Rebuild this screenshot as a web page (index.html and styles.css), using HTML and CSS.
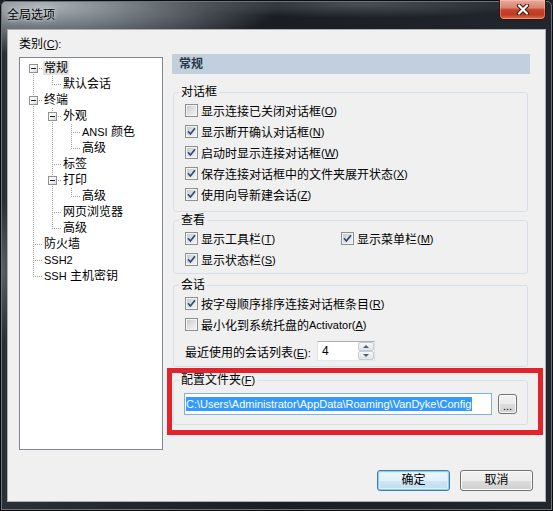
FILE: index.html
```html
<!DOCTYPE html>
<html lang="zh-CN">
<head>
<meta charset="utf-8">
<title>全局选项</title>
<link rel="stylesheet" href="styles.css">
</head>
<body>
<div class="window">
  <div class="titlebar">
    <span class="title">全局选项</span>
    <span class="close">
      <svg width="14" height="11" viewBox="0 0 14 11">
        <path d="M3 1.5 L11 9.5 M11 1.5 L3 9.5" stroke="#3a1410" stroke-width="4.2" stroke-linecap="round" fill="none"/>
        <path d="M3 1.5 L11 9.5 M11 1.5 L3 9.5" stroke="#ffffff" stroke-width="2.3" stroke-linecap="round" fill="none"/>
      </svg>
    </span>
  </div>
  <div class="client">
    <div class="main">
      <div class="left">
        <div class="cat-label">类别<span class="ak">(<u>C</u>):</span></div>
        <div class="tree">
          <div class="row"><span class="g exp first"><span class="box"></span></span><span class="lbl sel">常规</span></div>
          <div class="row"><span class="g pipe"></span><span class="g elbow"></span><span class="lbl">默认会话</span></div>
          <div class="row"><span class="g exp"><span class="box"></span></span><span class="lbl">终端</span></div>
          <div class="row"><span class="g pipe"></span><span class="g exp"><span class="box"></span></span><span class="lbl">外观</span></div>
          <div class="row"><span class="g pipe"></span><span class="g pipe"></span><span class="g tee"></span><span class="lbl"><span class="lat">ANSI</span> 颜色</span></div>
          <div class="row"><span class="g pipe"></span><span class="g pipe"></span><span class="g elbow"></span><span class="lbl">高级</span></div>
          <div class="row"><span class="g pipe"></span><span class="g tee"></span><span class="lbl">标签</span></div>
          <div class="row"><span class="g pipe"></span><span class="g exp"><span class="box"></span></span><span class="lbl">打印</span></div>
          <div class="row"><span class="g pipe"></span><span class="g pipe"></span><span class="g elbow"></span><span class="lbl">高级</span></div>
          <div class="row"><span class="g pipe"></span><span class="g tee"></span><span class="lbl">网页浏览器</span></div>
          <div class="row"><span class="g pipe"></span><span class="g elbow"></span><span class="lbl">高级</span></div>
          <div class="row"><span class="g tee"></span><span class="lbl">防火墙</span></div>
          <div class="row"><span class="g tee"></span><span class="lbl"><span class="lat">SSH2</span></span></div>
          <div class="row"><span class="g elbow"></span><span class="lbl"><span class="lat">SSH</span> 主机密钥</span></div>
        </div>
      </div>
      <div class="right">
        <div class="header">常规</div>

        <fieldset class="grp grp-dlg">
          <legend>对话框</legend>
          <div class="chk"><span class="cb"></span>显示连接已关闭对话框<span class="ak">(<u>O</u>)</span></div>
          <div class="chk"><span class="cb"><svg width="11" height="11" viewBox="0 0 11 11"><path d="M2 5.2 L4.4 8 L9 2.3" stroke="#33467c" stroke-width="1.7" fill="none"/></svg></span>显示断开确认对话框<span class="ak">(<u>N</u>)</span></div>
          <div class="chk"><span class="cb"><svg width="11" height="11" viewBox="0 0 11 11"><path d="M2 5.2 L4.4 8 L9 2.3" stroke="#33467c" stroke-width="1.7" fill="none"/></svg></span>启动时显示连接对话框<span class="ak">(<u>W</u>)</span></div>
          <div class="chk"><span class="cb"><svg width="11" height="11" viewBox="0 0 11 11"><path d="M2 5.2 L4.4 8 L9 2.3" stroke="#33467c" stroke-width="1.7" fill="none"/></svg></span>保存连接对话框中的文件夹展开状态<span class="ak">(<u>X</u>)</span></div>
          <div class="chk"><span class="cb"><svg width="11" height="11" viewBox="0 0 11 11"><path d="M2 5.2 L4.4 8 L9 2.3" stroke="#33467c" stroke-width="1.7" fill="none"/></svg></span>使用向导新建会话<span class="ak">(<u>Z</u>)</span></div>
        </fieldset>

        <fieldset class="grp grp-view">
          <legend>查看</legend>
          <div class="cols">
            <div class="chk"><span class="cb"><svg width="11" height="11" viewBox="0 0 11 11"><path d="M2 5.2 L4.4 8 L9 2.3" stroke="#33467c" stroke-width="1.7" fill="none"/></svg></span>显示工具栏<span class="ak">(<u>T</u>)</span></div>
            <div class="chk"><span class="cb"><svg width="11" height="11" viewBox="0 0 11 11"><path d="M2 5.2 L4.4 8 L9 2.3" stroke="#33467c" stroke-width="1.7" fill="none"/></svg></span>显示菜单栏<span class="ak">(<u>M</u>)</span></div>
            <div class="chk"><span class="cb"><svg width="11" height="11" viewBox="0 0 11 11"><path d="M2 5.2 L4.4 8 L9 2.3" stroke="#33467c" stroke-width="1.7" fill="none"/></svg></span>显示状态栏<span class="ak">(<u>S</u>)</span></div>
          </div>
        </fieldset>

        <fieldset class="grp grp-sess">
          <legend>会话</legend>
          <div class="chk"><span class="cb"><svg width="11" height="11" viewBox="0 0 11 11"><path d="M2 5.2 L4.4 8 L9 2.3" stroke="#33467c" stroke-width="1.7" fill="none"/></svg></span>按字母顺序排序连接对话框条目<span class="ak">(<u>R</u>)</span></div>
          <div class="chk"><span class="cb"></span>最小化到系统托盘的<span class="lat">Activator</span><span class="ak">(<u>A</u>)</span></div>
          <div class="spinrow">
            <span class="spinlabel">最近使用的会话列表<span class="ak">(<u>E</u>):</span></span>
            <span class="spin">
              <span class="val">4</span>
              <span class="arrows">
                <span class="arr up"><span class="tri-up"></span></span>
                <span class="arr down"><span class="tri-down"></span></span>
              </span>
            </span>
          </div>
        </fieldset>

        <div class="mark">
          <fieldset class="grp grp-cfg">
            <legend>配置文件夹<span class="ak">(<u>F</u>)</span></legend>
            <div class="cfgrow">
              <span class="path"><span class="selected">C:\Users\Administrator\AppData\Roaming\VanDyke\Config</span></span>
              <span class="browse">...</span>
            </div>
          </fieldset>
        </div>
      </div>
    </div>
    <div class="buttons">
      <button class="btn default">确定</button>
      <button class="btn">取消</button>
    </div>
  </div>
</div>
</body>
</html>
```
FILE: styles.css
```css
html, body {
  margin: 0;
  padding: 0;
  background: #1a1d21;
}
body {
  width: 553px;
  height: 511px;
  overflow: hidden;
  font-family: "Liberation Sans", "Noto Sans CJK SC", sans-serif;
  font-size: 12px;
  color: #000;
}
.window {
  width: 553px;
  height: 511px;
  box-sizing: border-box;
  padding: 0 7px 9px;
  display: flex;
  flex-direction: column;
  border-radius: 6px 6px 0 0;
  background:
    radial-gradient(ellipse 240px 48px at 40px 6px, rgba(180,187,192,.95) 0%, rgba(140,148,154,.7) 45%, rgba(60,66,72,0) 100%),
    radial-gradient(ellipse 180px 14px at 360px 4px, rgba(110,118,126,.55) 0%, rgba(110,118,126,0) 100%),
    radial-gradient(ellipse 12px 70px at 3px 270px, rgba(120,128,135,.6) 0%, rgba(120,128,135,0) 100%),
    linear-gradient(to right, #2b3036 0%, #1a1e23 50%, #22272d 100%);
  box-shadow: inset 0 0 0 1px #0a0c0f, inset 0 0 0 2px #6c737a;
}
.titlebar {
  height: 29px;
  flex: none;
  display: flex;
  align-items: flex-start;
  justify-content: space-between;
}
.title {
  line-height: 16px;
  margin-top: 7px;
  color: #000;
  text-shadow: 0 0 6px rgba(230,235,238,.9), 0 0 3px rgba(230,235,238,.9);
}
.close {
  width: 47px;
  height: 20px;
  box-sizing: border-box;
  border: 1px solid #3c120c;
  border-top: none;
  border-radius: 0 0 5px 5px;
  background: linear-gradient(to bottom, #e9aa9b 0%, #d98470 40%, #c4432b 52%, #c13a22 78%, #dc7650 100%);
  box-shadow: inset 0 0 0 1px rgba(255,220,210,.35);
  display: flex;
  align-items: center;
  justify-content: center;
}
.client {
  flex: 1;
  background: #f0f0f0;
  border: 1px solid #a9b0b6;
  padding: 0 12px 10px 11px;
  display: flex;
  flex-direction: column;
}
.main {
  display: flex;
  align-items: flex-start;
}
.left {
  width: 144px;
  flex: none;
}
.cat-label {
  margin-top: 6px;
  height: 16px;
  line-height: 16px;
}
.ak {
  font-size: 11px;
}
.lat {
  font-size: 11px;
}
u {
  text-decoration: underline;
  text-underline-offset: 1px;
}
.tree {
  margin-top: 5px;
  height: 393px;
  box-sizing: border-box;
  border: 1px solid #828790;
  background: #fff;
  padding: 2px 0 0 4px;
}
.row {
  display: flex;
  height: 16px;
  align-items: center;
}
.g {
  width: 19px;
  height: 16px;
  flex: none;
  display: flex;
  align-items: flex-start;
}
.pipe {
  background: repeating-linear-gradient(to bottom, #a0a0a0 0 1px, transparent 1px 2px) 9px 0 / 1px 16px no-repeat;
}
.tee {
  background:
    repeating-linear-gradient(to right, #a0a0a0 0 1px, transparent 1px 2px) 11px 8px / 8px 1px no-repeat,
    repeating-linear-gradient(to bottom, #a0a0a0 0 1px, transparent 1px 2px) 9px 0 / 1px 16px no-repeat;
}
.elbow {
  background:
    repeating-linear-gradient(to right, #a0a0a0 0 1px, transparent 1px 2px) 11px 8px / 8px 1px no-repeat,
    repeating-linear-gradient(to bottom, #a0a0a0 0 1px, transparent 1px 2px) 9px 0 / 1px 9px no-repeat;
}
.exp {
  background:
    repeating-linear-gradient(to right, #a0a0a0 0 1px, transparent 1px 2px) 15px 8px / 4px 1px no-repeat,
    repeating-linear-gradient(to bottom, #a0a0a0 0 1px, transparent 1px 2px) 9px 0 / 1px 16px no-repeat;
}
.exp.first {
  background:
    repeating-linear-gradient(to right, #a0a0a0 0 1px, transparent 1px 2px) 15px 8px / 4px 1px no-repeat,
    repeating-linear-gradient(to bottom, #a0a0a0 0 1px, transparent 1px 2px) 9px 8px / 1px 8px no-repeat;
}
.box {
  width: 9px;
  height: 9px;
  box-sizing: border-box;
  margin: 4px 0 0 5px;
  border: 1px solid #919191;
  background: linear-gradient(135deg, #ffffff 0%, #f3f3f3 50%, #d9d9d9 100%);
  display: flex;
  align-items: center;
  justify-content: center;
}
.box::before {
  content: "";
  width: 5px;
  height: 1px;
  background: #1e1e1e;
}
.lbl {
  padding: 0 1px;
  line-height: 14px;
  white-space: nowrap;
}
.lbl.sel {
  background: #e3e3e3;
}
.right {
  width: 358px;
  flex: none;
  margin-left: 9px;
  padding-top: 24px;
}
.header {
  height: 20px;
  line-height: 20px;
  background: #c2cfdc;
  padding-left: 7px;
  font-weight: bold;
  color: #283848;
}
.grp {
  margin: 0 2px 0 1px;
  padding: 0 0 6px 0;
  border: 1px solid #d5dfe5;
  border-radius: 3px;
  min-width: 0;
}
.grp legend {
  margin-left: 5px;
  padding: 0 2px;
  line-height: 16px;
  height: 16px;
}
.grp-dlg {
  margin-top: 10px;
}
.grp-view {
  margin-top: 0;
  padding-bottom: 3px;
}
.grp-sess {
  margin-top: 3px;
  padding-bottom: 5px;
}
.chk {
  display: flex;
  align-items: center;
  height: 21px;
  margin-left: 11px;
  white-space: nowrap;
}
.cols {
  display: grid;
  grid-template-columns: 156px auto;
  margin-left: 11px;
}
.cols .chk {
  margin-left: 0;
}
.cb {
  width: 13px;
  height: 13px;
  box-sizing: border-box;
  flex: none;
  margin-right: 3px;
  border: 1px solid #8e8f8f;
  background: linear-gradient(135deg, #c2c6cb 0%, #dfe1e3 50%, #f5f5f5 100%);
  box-shadow: inset 0 0 0 1px #f4f4f4;
  display: flex;
  align-items: center;
  justify-content: center;
}
.spinrow {
  display: flex;
  align-items: center;
  margin: 6px 0 0 11px;
  height: 20px;
}
.spinlabel {
  width: 132px;
  flex: none;
  white-space: nowrap;
}
.spin {
  width: 58px;
  height: 20px;
  box-sizing: border-box;
  border: 1px solid #abadb3;
  border-left-color: #e2e3ea;
  border-right-color: #dbdfe6;
  border-bottom-color: #e3e9ef;
  background: #fff;
  display: flex;
}
.val {
  flex: 1;
  padding-left: 4px;
  line-height: 18px;
}
.arrows {
  width: 16px;
  display: flex;
  flex-direction: column;
}
.arr {
  flex: 1;
  box-sizing: border-box;
  border: 1px solid #c9ccd1;
  border-radius: 2px;
  background: linear-gradient(to bottom, #f7f7f7, #e1e3e6);
  display: flex;
  align-items: center;
  justify-content: center;
}
.tri-up {
  width: 0;
  height: 0;
  border-left: 3px solid transparent;
  border-right: 3px solid transparent;
  border-bottom: 3px solid #4b5d7e;
}
.tri-down {
  width: 0;
  height: 0;
  border-left: 3px solid transparent;
  border-right: 3px solid transparent;
  border-top: 3px solid #4b5d7e;
}
.mark {
  margin: 1px -13px 0 -5px;
  border: 5px solid #e3232b;
  padding: 0 10px 5px 0;
}
.mark .grp-cfg {
  margin: -1px 0 0 1px;
  padding-bottom: 9px;
}
.cfgrow {
  display: flex;
  align-items: center;
  margin: 5px 0 0 10px;
}
.path {
  width: 308px;
  height: 22px;
  box-sizing: border-box;
  border: 1px solid #7fb0de;
  background: #fff;
  padding-left: 1px;
  display: flex;
  align-items: center;
  font-size: 11px;
  white-space: nowrap;
  overflow: hidden;
}
.selected {
  background: #3399ff;
  color: #fff;
  line-height: 14px;
  padding-right: 1px;
}
.browse {
  margin-left: 6px;
  width: 19px;
  height: 20px;
  box-sizing: border-box;
  border: 1px solid #707070;
  border-radius: 3px;
  background: linear-gradient(to bottom, #f2f2f2 0%, #ebebeb 50%, #dddddd 50%, #cfcfcf 100%);
  box-shadow: inset 0 0 0 1px #fbfbfb;
  font-size: 11px;
  line-height: 22px;
  text-align: center;
}
.buttons {
  margin-top: 20px;
  display: flex;
  justify-content: flex-end;
  gap: 10px;
}
.btn {
  width: 73px;
  height: 21px;
  box-sizing: border-box;
  padding: 0;
  margin: 0;
  font: inherit;
  color: #000;
  line-height: 17px;
  border: 1px solid #707070;
  border-radius: 3px;
  background: linear-gradient(to bottom, #f2f2f2 0%, #ebebeb 50%, #dddddd 50%, #cfcfcf 100%);
  box-shadow: inset 0 0 0 1px #fcfcfc;
}
.btn.default {
  border-color: #3c7fb1;
  background: linear-gradient(to bottom, #eef7fc 0%, #e1f0f9 50%, #cfe6f4 50%, #bfdcef 100%);
  box-shadow: inset 0 0 0 1px #8fcdf0, inset 0 0 0 2px #dcf0fb;
}
```
